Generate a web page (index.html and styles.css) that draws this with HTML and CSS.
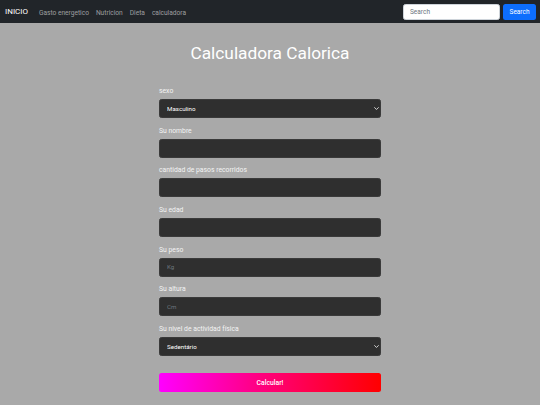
FILE: index.html
```html
<!DOCTYPE html>
<html lang="es">
<head>
<meta charset="utf-8">
<title>Calculadora Calorica</title>
<link rel="stylesheet" href="styles.css">
</head>
<body>
<nav class="navbar">
  <a class="brand" href="#">INICIO</a>
  <ul class="nav-links">
    <li><a href="#">Gasto energetico</a></li>
    <li><a href="#">Nutricion</a></li>
    <li><a href="#">Dieta</a></li>
    <li><a href="#">calculadora</a></li>
  </ul>
  <form class="search">
    <input class="search-input" type="search" placeholder="Search">
    <button class="search-btn" type="button">Search</button>
  </form>
</nav>
<main class="main">
  <h1 class="title">Calculadora Calorica</h1>
  <form class="calc">
    <div class="group">
      <label class="label lower">sexo</label>
      <div class="select-wrap">
        <select class="field"><option>Masculino</option><option>Femenino</option></select>
        <svg class="chev" viewBox="0 0 16 16" width="5" height="5"><path d="M2 5l6 6 6-6" fill="none" stroke="#fff" stroke-width="2.5" stroke-linecap="round" stroke-linejoin="round"/></svg>
      </div>
    </div>
    <div class="group">
      <label class="label">Su nombre</label>
      <input class="field" type="text">
    </div>
    <div class="group">
      <label class="label lower">cantidad de pasos recorridos</label>
      <input class="field" type="text">
    </div>
    <div class="group">
      <label class="label">Su edad</label>
      <input class="field" type="text">
    </div>
    <div class="group">
      <label class="label">Su peso</label>
      <input class="field" type="text" placeholder="Kg">
    </div>
    <div class="group">
      <label class="label">Su altura</label>
      <input class="field" type="text" placeholder="Cm">
    </div>
    <div class="group">
      <label class="label">Su nivel de actividad física</label>
      <div class="select-wrap">
        <select class="field"><option>Sedentário</option><option>Activo</option></select>
        <svg class="chev" viewBox="0 0 16 16" width="5" height="5"><path d="M2 5l6 6 6-6" fill="none" stroke="#fff" stroke-width="2.5" stroke-linecap="round" stroke-linejoin="round"/></svg>
      </div>
    </div>
    <button class="calc-btn" type="button">Calcular!</button>
  </form>
</main>
</body>
</html>
```
FILE: styles.css
```css
* { box-sizing: border-box; }
html, body { margin: 0; padding: 0; }
body {
  background: #a9a9a9;
  font-family: Roboto, "Liberation Sans", sans-serif;
  color: #fff;
  height: 405px;
  overflow: hidden;
}
.navbar {
  height: 23px;
  background: #212529;
  display: flex;
  align-items: center;
  padding: 0 4px 0 5px;
}
.brand {
  color: #fff;
  text-decoration: none;
  font-size: 8px;
  font-weight: 400;
  margin-right: 11px;
  line-height: 10px;
}
.nav-links {
  display: flex;
  align-items: center;
  list-style: none;
  margin: 0;
  padding: 0;
  gap: 7px;
  flex: 1;
  line-height: 10px;
}
.nav-links a {
  color: rgba(255,255,255,.55);
  text-decoration: none;
  font-size: 6.6px;
  font-weight: 400;
}
.search { display: flex; gap: 3px; }
.search-input {
  width: 97px;
  height: 16px;
  border: 0.5px solid #ced4da;
  border-radius: 2.5px;
  background: #fff;
  font-family: inherit;
  font-size: 6.5px;
  padding: 0 6px;
  outline: none;
}
.search-input::placeholder { color: #6c757d; }
.search-btn {
  width: 33px;
  height: 16px;
  background: #0d6efd;
  color: #fff;
  border: 0;
  border-radius: 2.5px;
  font-family: inherit;
  font-size: 6.5px;
  padding: 0;
}
.main { width: 222px; margin: 0 auto; }
.title {
  margin: 19px -40px 22px;
  font-size: 17.3px;
  line-height: 22px;
  font-weight: 400;
  text-align: center;
  white-space: nowrap;
}
.calc { display: flex; flex-direction: column; }
.group { display: flex; flex-direction: column; margin-bottom: 7.7px; }
.label {
  font-size: 6.8px;
  font-weight: 400;
  line-height: 10px;
  margin-bottom: 3px;
  color: #f4f4f4;
}
.field {
  width: 100%;
  height: 19px;
  background: #2f2f2f;
  border: 0.5px solid #3a3a3a;
  border-radius: 2.5px;
  color: #fff;
  font-family: inherit;
  font-size: 6.2px;
  padding: 0 7px;
  outline: none;
  appearance: none;
  -webkit-appearance: none;
  display: block;
}
.field::placeholder { color: #6c757d; }
.select-wrap { position: relative; }
.chev {
  position: absolute;
  right: 2.5px;
  top: 7px;
}
.calc-btn {
  margin-top: 9.3px;
  height: 19px;
  width: 100%;
  border: 0;
  border-radius: 2.5px;
  background: linear-gradient(to right, #ff00ff 0%, #ff0080 45%, #ff0000 100%);
  color: #fff;
  font-family: inherit;
  font-size: 6.8px;
  font-weight: 500;
  padding: 0;
}
```
